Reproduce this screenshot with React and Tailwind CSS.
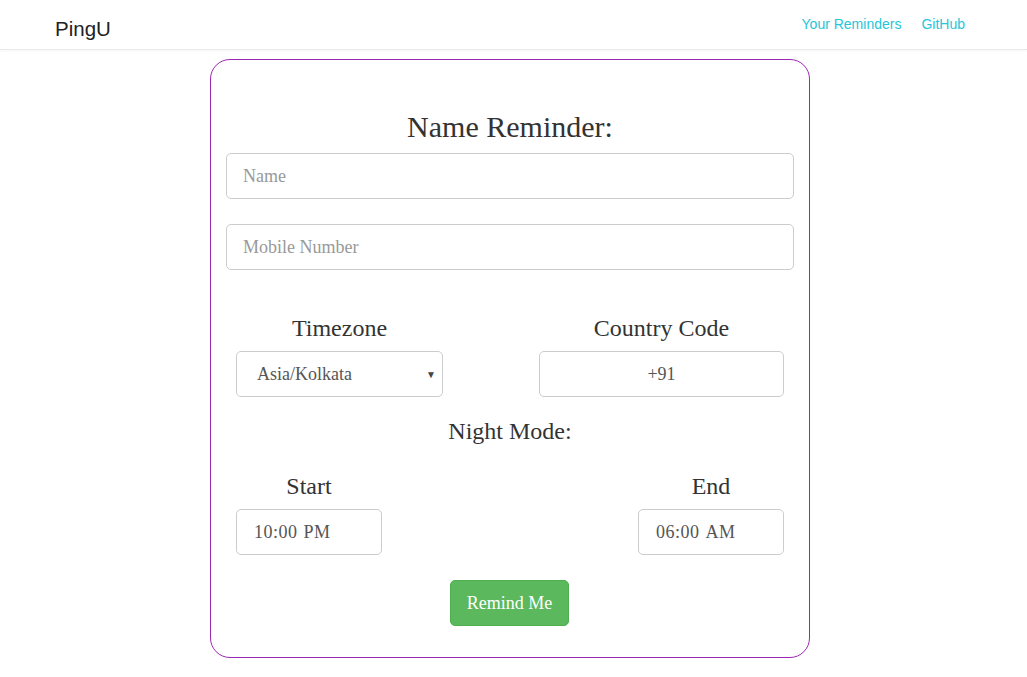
import React from "react";

const serif = { fontFamily: '"Liberation Serif", "Times New Roman", serif' };

export default function App() {
  return (
    <div className="min-h-screen bg-white" style={serif}>
      <nav className="h-[50px] border-b border-[#e8e8e8] shadow-[0_1px_2px_rgba(0,0,0,0.04)] flex items-start justify-between pl-[55px] pr-[62px] font-['Liberation_Sans',Arial,sans-serif]">
        <div className="pt-[17px] text-[20.5px] leading-[24px] text-[#222]">PingU</div>
        <div className="pt-[15px] flex gap-[20px] text-[14px] leading-[18px] text-[#26c6da]">
          <a href="#">Your Reminders</a>
          <a href="#">GitHub</a>
        </div>
      </nav>
      <div className="flex justify-center pt-[9px] pr-[7px]">
        <div className="w-[600px] border border-[#9c27b0] rounded-[20px] px-[15px] pt-[50px] pb-[31px] text-[#333]">
          <h1 className="text-center text-[30px] leading-[33px] mb-[10px]">Name Reminder:</h1>
          <input
            className="block w-full h-[46px] border border-[#ccc] rounded-[5px] px-[16px] text-[18px] text-[#555] placeholder:text-[#999] outline-none"
            style={serif}
            placeholder="Name"
          />
          <input
            className="block w-full h-[46px] border border-[#ccc] rounded-[5px] px-[16px] mt-[25px] text-[18px] text-[#555] placeholder:text-[#999] outline-none"
            style={serif}
            placeholder="Mobile Number"
          />
          <div className="flex justify-between px-[10px] mt-[45px]">
            <div className="flex flex-col items-center w-[207px]">
              <div className="text-[24px] leading-[26px]">Timezone</div>
              <div className="mt-[10px] w-full h-[46px] border border-[#ccc] rounded-[5px] flex items-center justify-between pl-[20px] pr-[6px] text-[18px] text-[#555]">
                <span>Asia/Kolkata</span>
                <span className="text-[10px] text-[#444]">▼</span>
              </div>
            </div>
            <div className="flex flex-col items-center w-[245px]">
              <div className="text-[24px] leading-[26px]">Country Code</div>
              <input
                className="mt-[10px] w-full h-[46px] border border-[#ccc] rounded-[5px] text-center text-[18px] text-[#555] outline-none"
                style={serif}
                defaultValue="+91"
              />
            </div>
          </div>
          <div className="text-center text-[24px] leading-[26px] mt-[21px]">Night Mode:</div>
          <div className="flex justify-between px-[10px] mt-[29px]">
            <div className="flex flex-col items-center w-[146px]">
              <div className="text-[24px] leading-[26px]">Start</div>
              <div className="mt-[10px] w-full h-[46px] border border-[#ccc] rounded-[5px] flex items-center pl-[17px] text-[18px] text-[#555] tracking-[0.5px] gap-[6px]">
                <span>10:00</span><span>PM</span>
              </div>
            </div>
            <div className="flex flex-col items-center w-[146px]">
              <div className="text-[24px] leading-[26px]">End</div>
              <div className="mt-[10px] w-full h-[46px] border border-[#ccc] rounded-[5px] flex items-center pl-[17px] text-[18px] text-[#555] tracking-[0.5px] gap-[6px]">
                <span>06:00</span><span>AM</span>
              </div>
            </div>
          </div>
          <div className="flex justify-center mt-[25px] pr-[1px]">
            <button
              className="w-[119px] h-[46px] bg-[#5cb85c] border border-[#4cae4c] rounded-[5px] text-white text-[18px]"
              style={serif}
            >
              Remind Me
            </button>
          </div>
        </div>
      </div>
    </div>
  );
}
